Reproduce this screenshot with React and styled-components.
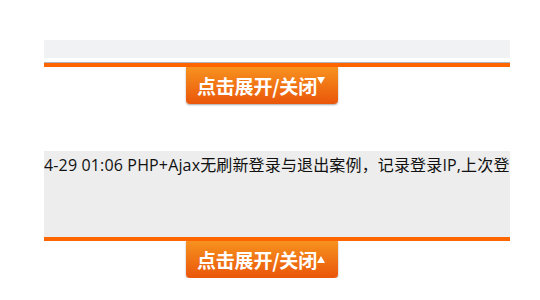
import styled, { createGlobalStyle } from "styled-components";

const GlobalStyle = createGlobalStyle`
  html, body {
    margin: 0;
    padding: 0;
    background: #ffffff;
  }
`;

const Page = styled.div`
  display: flex;
  flex-direction: column;
  width: 466px;
  padding: 40px 0 0 44px;
  font-family: "Noto Sans CJK SC", "Noto Sans", sans-serif;
`;

const Panel = styled.div`
  display: flex;
  flex-direction: column;
  margin-top: ${(p) => p.$top || 0}px;
`;

const Box = styled.div`
  height: ${(p) => p.$height}px;
  background: ${(p) => p.$bg};
  overflow: hidden;
  white-space: nowrap;
  color: #111;
  font-family: "Open Sans", "Noto Sans CJK SC", sans-serif;
  font-size: 16px;
  letter-spacing: 0.15px;
  line-height: 24px;
  padding-top: ${(p) => p.$pad || 0}px;
  box-sizing: border-box;
`;

const Rule = styled.div`
  margin-top: ${(p) => p.$gap || 0}px;
  border-top: ${(p) => (p.$grey ? "1px solid #b4b5bb" : "none")};
  height: 4px;
  background: #ff6600;
`;

const Toggle = styled.button`
  display: flex;
  align-items: center;
  align-self: flex-start;
  margin-left: 142px;
  width: 152px;
  height: 37px;
  padding: 0 0 0 11px;
  border: none;
  border-radius: 0 0 4px 4px;
  background: linear-gradient(#f7921f, #ea560a);
  box-shadow: 0 1px 2px rgba(0, 0, 0, 0.35);
  color: #fff;
  font-family: "Noto Sans CJK SC", "Noto Sans", sans-serif;
  font-size: 19px;
  font-weight: 700;
  letter-spacing: -0.2px;
  cursor: pointer;
`;

const Arrow = styled.span`
  width: 0;
  height: 0;
  align-self: ${(p) => (p.$up ? "center" : "flex-start")};
  margin-top: ${(p) => (p.$up ? "-1px" : "10px")};
  border-left: 4px solid transparent;
  border-right: 4px solid transparent;
  ${(p) =>
    p.$up
      ? "border-bottom: 7px solid #fff;"
      : "border-top: 7px solid #fff;"}
`;

const App = () => (
  <Page>
    <GlobalStyle />
    <Panel>
      <Box $height={18} $bg="#f1f2f3" />
      <Rule $gap={4} $grey />
      <Toggle>
        点击展开/关闭
        <Arrow />
      </Toggle>
    </Panel>
    <Panel $top={47}>
      <Box $height={86} $bg="#ededed" $pad={2}>
        4-29 01:06 PHP+Ajax无刷新登录与退出案例，记录登录IP,上次登
      </Box>
      <Rule />
      <Toggle>
        点击展开/关闭
        <Arrow $up />
      </Toggle>
    </Panel>
  </Page>
);

export default App;
